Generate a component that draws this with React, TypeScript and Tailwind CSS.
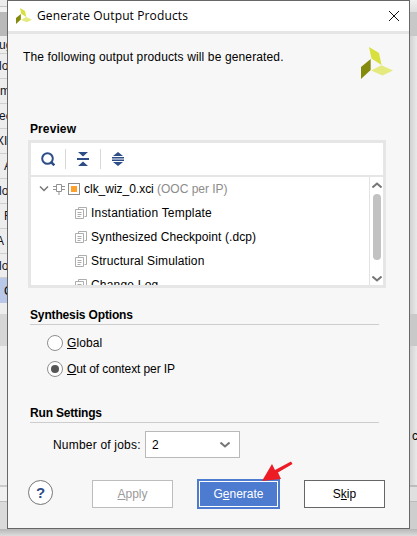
import React from "react";

const rows = [
  { text: "ug", style: "h-[18px] pt-[1px] -indent-[1px]" },
  { text: "lo", style: "h-[25px] -indent-[1px]" },
  { text: "m", style: "h-[25px] indent-0" },
  { text: "ec", style: "h-[25px] -indent-[1px]" },
  { text: "XI", style: "h-[25px] -indent-[4px]" },
  { text: "A", style: "h-[25px] indent-[4px]" },
  { text: "lo", style: "h-[25px] -indent-[1px]" },
  { text: "F", style: "h-[25px] indent-[4px]" },
  { text: "A", style: "h-[25px] -indent-[4px]" },
  { text: "lo", style: "h-[24px] -indent-[1px]" },
];

const outputs = [
  { text: "Instantiation Template", tracking: "tracking-[0.2px]" },
  { text: "Synthesized Checkpoint (.dcp)", tracking: "tracking-[0.08px]" },
  { text: "Structural Simulation", tracking: "tracking-[0.13px]" },
  { text: "Change Log", tracking: "tracking-[0.2px]" },
];

function Logo({ className }: { className: string }) {
  return (
    <svg className={className} viewBox="0 0 32 32">
      <path d="M8 0 18 6 20.500 18 10.500 11.500Z" fill="#d7e03c" />
      <path d="M0 20 9.700 12V23L0 32Z" fill="#848a0c" />
      <path d="M10 23.500 20.500 18.200 32 23.500 21.500 28.500Z" fill="#e4ea7e" />
    </svg>
  );
}

function CopyIcon() {
  return (
    <svg className="h-3 w-3 shrink-0" viewBox="0 0 12 12" fill="none" stroke="#adadad">
      <path d="M3.500 2.500V.5H11.500V9.500H9.500M.5 2.500H8.500V11.500H.5ZM2.500 5.500H6.500M2.500 7.500H6.500M2.500 9.500H5.500" />
    </svg>
  );
}

function LeftStrip() {
  return (
    <div className="flex w-[7px] shrink-0 flex-col overflow-hidden bg-[#ededed]">
      <div className="h-[6px] shrink-0" />
      <div className="h-[6px] shrink-0 border-t border-[#c4c4c4] bg-[#f1f1f1]" />
      <div className="h-[24px] shrink-0 bg-[#b9b9b9]" />
      {rows.map((r, i) => (
        <div key={i} className={"flex shrink-0 items-center whitespace-nowrap border-b border-[#cfcfcf] text-[#111122] " + r.style}>{r.text}</div>
      ))}
      <div className="flex h-[25px] shrink-0 items-center bg-[#b9c7e8] pl-[4px]">C</div>
      <div className="h-[11px] shrink-0" />
      <div className="h-[32px] shrink-0 bg-[#d6d6d6]" />
      <div className="h-[139px] shrink-0" />
      <div className="h-[2px] shrink-0 bg-[#cbcbcb]" />
      <div className="h-[15px] shrink-0 border-b border-[#bdbdbd] bg-[#f0f0f0]" />
      <div className="grow bg-[#dadada]" />
    </div>
  );
}

function RightStrip() {
  return (
    <div className="flex w-[7px] shrink-0 flex-col overflow-hidden bg-gradient-to-r from-[#d2d2d2] to-[#e9e9e9]">
      <div className="h-[12px] shrink-0 bg-gradient-to-b from-[#f0f0f0] to-[#dedede]" />
      <div className="h-[24px] shrink-0 bg-[#c8c8c8]" />
      <div className="h-[278px] shrink-0" />
      <div className="h-[32px] shrink-0 bg-[#c9c9c9]" />
      <div className="h-[82px] shrink-0" />
      <div className="flex h-[16px] shrink-0 items-center pl-[2px]">c</div>
      <div className="h-[41px] shrink-0" />
      <div className="h-[2px] shrink-0 bg-[#bcbcbc]" />
      <div className="h-[15px] shrink-0 border-b border-[#bcbcbc] bg-[#e0e0e0]" />
      <div className="grow bg-[#cecece]" />
    </div>
  );
}

export default function App() {
  return (
    <div className="flex h-[536px] w-[417px] flex-col overflow-hidden bg-[#dadada] font-['Liberation_Sans',Arial,sans-serif] text-[12px] leading-[14px] text-black">
      <div className="flex h-[529px] shrink-0">
        <LeftStrip />
        <main className="flex w-[403px] shrink-0 flex-col border border-[#676767] bg-[#f7f7f7]">
          <header className="flex h-[30px] shrink-0 items-center bg-white pl-[8px] pr-[10px]">
            <Logo className="h-4 w-4" />
            <h1 className="ml-[5px] grow font-['Open_Sans','Noto_Sans',sans-serif] text-[12px] tracking-[0.12px]">Generate Output Products</h1>
            <svg className="h-[10px] w-[10px]" viewBox="0 0 10 10" stroke="#111"><path d="M0 0 10 10M10 0 0 10" /></svg>
          </header>
          <div className="h-[3px] shrink-0 bg-[#e5e5e5]" />
          <div className="flex h-[87px] shrink-0 justify-between pl-[15px] pr-[16px] pt-[13px]">
            <p className="mt-[3px] tracking-[0.135px]">The following output products will be generated.</p>
            <Logo className="h-8 w-8" />
          </div>
          <h2 className="ml-[22px] h-[19px] shrink-0 pt-[1px] font-bold tracking-[0.1px]">Preview</h2>
          <section className="ml-[20px] flex h-[148px] w-[358px] shrink-0 flex-col border-[3px] border-[#e6e6e6] bg-white">
            <div className="flex h-[34px] shrink-0 items-center border-b-2 border-[#e6e6e6] text-[#2d4d87]">
              <svg className="ml-[10px] h-[14px] w-[14px]" viewBox="0 0 14 14" fill="none" stroke="currentColor" strokeWidth="2"><circle cx="6.500" cy="6.500" r="5.300" /><path d="m10 10 3.300 3.300" strokeWidth="2.500" /></svg>
              <i className="ml-[10px] h-5 w-px bg-[#d8d8d8]" />
              <svg className="ml-[11px] h-[14px] w-[12px]" viewBox="0 0 12 14" fill="currentColor"><path d="M1 0H11L6 4.500ZM0 6H12V8H0ZM1 14H11L6 9.500Z" /></svg>
              <i className="ml-[11px] h-5 w-px bg-[#d8d8d8]" />
              <svg className="ml-[11px] h-[14px] w-[12px]" viewBox="0 0 12 14" fill="currentColor"><path d="M1 4H11L6 0ZM0 5H12V6.500H0ZM0 7.500H12V9H0ZM1 10H11L6 14Z" /></svg>
            </div>
            <div className="flex h-[108px]">
              <div className="h-full grow overflow-hidden">
                <div className="flex h-6 items-center pl-[8px]">
                  <svg className="h-[6px] w-[10px]" viewBox="0 0 10 6" fill="none" stroke="#777" strokeWidth="1.500"><path d="m1 .5 4 4 4-4" /></svg>
                  <svg className="ml-[4px] h-[12px] w-[12px]" viewBox="0 0 12 12" fill="none" stroke="#929292"><path d="M3.500 1.500H8.500V8.500H3.500ZM0 3.500H3M0 6.500H3M9 3.500H12M9 6.500H12M6 9V12" /></svg>
                  <span className="ml-[3px] flex h-3 w-3 items-center justify-center border border-[#8c8c8c]"><i className="h-[6px] w-[6px] bg-[#ffa02d]" /></span>
                  <span className="ml-[4px] whitespace-pre tracking-[-0.02px]">clk_wiz_0.xci <span className="text-[#8c8c8c]">(OOC per IP)</span></span>
                </div>
                {outputs.map((o) => (
                  <div key={o.text} className="flex h-6 items-center pl-[44px]"><CopyIcon /><span className={"ml-[4px] " + o.tracking}>{o.text}</span></div>
                ))}
              </div>
              <div className="flex w-[14px] shrink-0 flex-col items-center border-l border-[#e3e3e3] pt-[5px]">
                <svg className="h-[6px] w-[10px]" viewBox="0 0 10 6" fill="none" stroke="#777" strokeWidth="2"><path d="m.5 5.500 4.500-4 4.500 4" /></svg>
                <div className="mt-[6px] h-[66px] w-[8px] rounded-full bg-[#c2c2c2]" />
                <svg className="mt-[16px] h-[6px] w-[10px]" viewBox="0 0 10 6" fill="none" stroke="#777" strokeWidth="2"><path d="m.5 .5 4.500 4 4.500-4" /></svg>
              </div>
            </div>
          </section>
          <h2 className="ml-[22px] mt-[20px] h-[17px] w-[349px] shrink-0 border-b border-[#cdcdcd] font-bold tracking-[-0.15px]">Synthesis Options</h2>
          <label className="ml-[39px] mt-[10px] flex h-4 shrink-0 items-center"><span className="h-4 w-4 rounded-full border border-[#8f8f8f] bg-white" /><span className="ml-1 tracking-[0.1px]"><u>G</u>lobal</span></label>
          <label className="ml-[39px] mt-[10px] flex h-4 shrink-0 items-center"><span className="flex h-4 w-4 items-center justify-center rounded-full border border-[#8f8f8f] bg-white"><i className="h-2 w-2 rounded-full bg-[#555]" /></span><span className="ml-1 tracking-[-0.1px]"><u>O</u>ut of context per IP</span></label>
          <h2 className="ml-[22px] mt-[29px] h-[17px] w-[349px] shrink-0 border-b border-[#cdcdcd] font-bold tracking-[-0.18px]">Run Settings</h2>
          <div className="ml-[45px] mt-[8px] flex h-[27px] shrink-0 items-center">
            <span className="w-[92px] tracking-[0.2px]">Number of jobs:</span>
            <div className="flex h-[27px] w-[95px] items-center justify-between border border-[#b9b9b9] bg-white pl-[6px] pr-[9px]">2
              <svg className="h-[6px] w-[10px]" viewBox="0 0 10 6" fill="none" stroke="#777" strokeWidth="2"><path d="m.5 .5 4.500 4 4.500-4" /></svg>
            </div>
          </div>
          <footer className="ml-[20px] mt-[21px] flex h-[30px] shrink-0 items-center">
            <button className="mb-[3px] flex h-[25px] w-[25px] items-center justify-center rounded-full border border-[#777] bg-white text-[15px] font-bold text-[#2d4d87]">?</button>
            <button className="ml-[39px] h-[28px] w-[81px] border border-[#bdbdbd] bg-white text-[#9b9b9b]"><u>A</u>pply</button>
            <button className="ml-[24px] h-[30px] w-[83px] border-2 border-[#4d7bd0] bg-white p-px text-white"><span className="flex h-full w-full items-center justify-center bg-[#4d7bd0]">G<u>e</u>nerate</span></button>
            <button className="ml-[24px] h-[28px] w-[81px] border border-[#666] bg-white">S<u>k</u>ip</button>
          </footer>
        </main>
        <RightStrip />
      </div>
      <div className="h-[7px] bg-gradient-to-b from-[#b7b7b7] to-[#dddddd]" />
      <svg className="absolute left-[261px] top-[460px] h-[22px] w-[32px]" viewBox="0 0 32 22"><path d="M1 21 11 4 14 10 30 1.500 31.500 4 17 12.500 20 19Z" fill="#ed1c24" /></svg>
    </div>
  );
}
